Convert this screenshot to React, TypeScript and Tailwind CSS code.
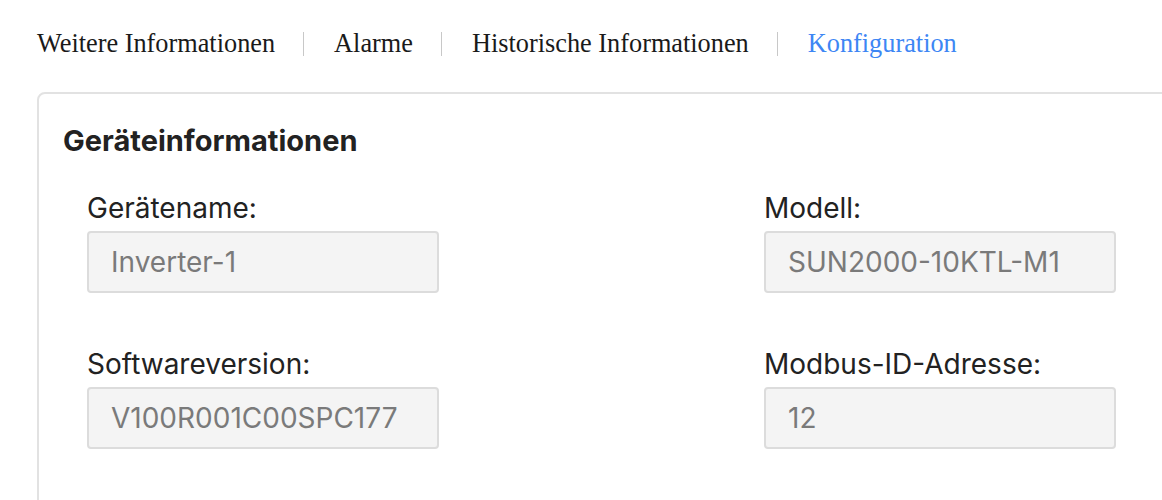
import { useState } from "react";

const tabs = ["Weitere Informationen", "Alarme", "Historische Informationen", "Konfiguration"];

const fields = [
  { label: "Gerätename:", value: "Inverter-1" },
  { label: "Modell:", value: "SUN2000-10KTL-M1" },
  { label: "Softwareversion:", value: "V100R001C00SPC177" },
  { label: "Modbus-ID-Adresse:", value: "12" },
];

const App = () => {
  const [active, setActive] = useState(3);

  return (
    <div className="w-[1162px] h-[500px] overflow-hidden bg-white">
      <div className="flex items-center pl-[37px] pt-[26px] h-[62px] font-['Liberation_Serif',serif] text-[26.3px] leading-[36px]">
        {tabs.map((tab, i) => (
          <div key={tab} className="flex items-center">
            {i > 0 && <span className="ml-[28px] mr-[30px] h-[24px] w-px bg-[#c8c8c8]" />}
            <button
              onClick={() => setActive(i)}
              className={i === active ? "text-[#3d86f4]" : "text-[#1a1a1a]"}
            >
              {tab}
            </button>
          </div>
        ))}
      </div>

      <div className="mt-[30px] ml-[37px] w-[1200px] h-[500px] rounded-[8px] border-2 border-[#e2e2e2] pl-[24px] pt-[30px] font-['Inter',sans-serif]">
        <h2 className="text-[29px] font-bold leading-[34px] text-[#222]">Geräteinformationen</h2>
        <div className="mt-[33px] ml-[24px] grid grid-cols-[352px_352px] gap-x-[325px] gap-y-[54px]">
          {fields.map((f) => (
            <div key={f.label}>
              <label className="block text-[28px] leading-[34px] text-[#222]">{f.label}</label>
              <div className="mt-[6px] h-[62px] flex items-center rounded-[4px] border-2 border-[#dcdcdc] bg-[#f4f4f4] px-[22px] text-[28px] text-[#7a7a7a]">
                {f.value}
              </div>
            </div>
          ))}
        </div>
      </div>
    </div>
  );
};

export default App;
